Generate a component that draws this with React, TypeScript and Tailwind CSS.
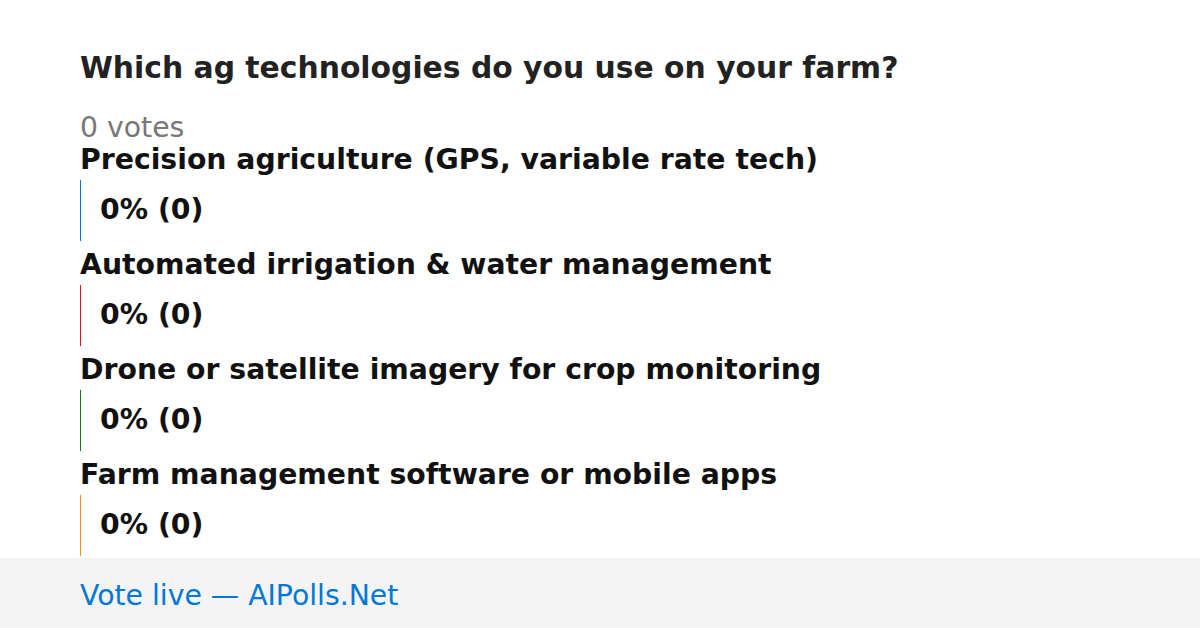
import React from 'react';

type Option = { label: string; color: string };

const options: Option[] = [
  { label: 'Precision agriculture (GPS, variable rate tech)', color: 'border-[#0078d4]' },
  { label: 'Automated irrigation & water management', color: 'border-[#e81123]' },
  { label: 'Drone or satellite imagery for crop monitoring', color: 'border-[#107c10]' },
  { label: 'Farm management software or mobile apps', color: 'border-[#ff8c00]' },
];

const App: React.FC = () => {
  return (
    <div className="w-[1200px] h-[628px] bg-white flex flex-col font-['DejaVu_Sans',sans-serif] overflow-hidden">
      <div className="flex-1 min-h-0 overflow-hidden px-[80px] pt-[50px]">
        <h1 className="text-[29.8px] leading-[36px] font-bold text-[#222]">
          Which ag technologies do you use on your farm?
        </h1>
        <div className="mt-[27px] text-[28.3px] leading-[30px] text-[#777]">0 votes</div>
        <div>
          {options.map(opt => (
            <div key={opt.label} className="mb-[7px]">
              <div className="text-[28.3px] leading-[34px] font-bold text-[#111] mb-[3px]">{opt.label}</div>
              <div className={`h-[61px] border-l ${opt.color} pl-[19px] flex items-center`}>
                <span className="text-[28.3px] font-bold text-[#111]">0% (0)</span>
              </div>
            </div>
          ))}
        </div>
      </div>
      <div className="shrink-0 h-[70px] bg-[#f4f4f4] px-[80px] pt-[6px] flex items-center">
        <span className="text-[28.3px] text-[#0078d4]">Vote live — AIPolls.Net</span>
      </div>
    </div>
  );
};

export default App;
